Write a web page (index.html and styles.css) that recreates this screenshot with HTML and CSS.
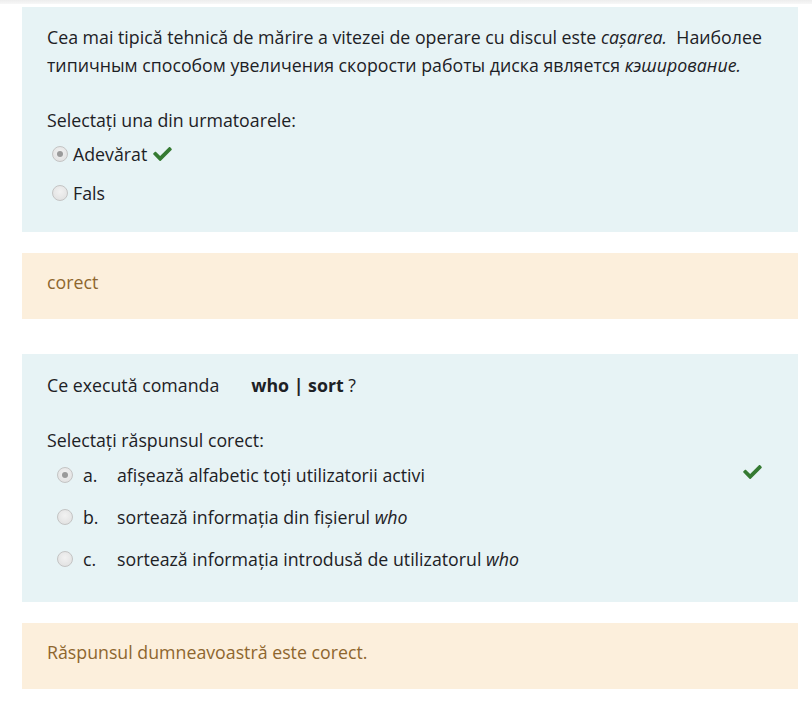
FILE: index.html
```html
<!DOCTYPE html>
<html lang="ro">
<head>
<meta charset="utf-8">
<title>Quiz review</title>
<link rel="stylesheet" href="styles.css">
</head>
<body>
<div class="topbar"></div>
<main class="page">
  <section class="formulation">
    <p class="qtext">Cea mai tipică tehnică de mărire a vitezei de operare cu discul este <em>cașarea.</em>&nbsp; Наиболее<br>типичным способом увеличения скорости работы диска является <em>кэширование.</em></p>
    <div class="prompt">Selectați una din urmatoarele:</div>
    <div class="answers tf">
      <div class="opt">
        <span class="radio checked"></span>
        <span class="label">Adevărat</span>
        <svg class="check inline" viewBox="0 64 512 384" aria-hidden="true"><path d="M173.9 439.4l-166.4-166.4c-10-10-10-26.2 0-36.2l36.2-36.2c10-10 26.2-10 36.2 0L192 312.7 432.1 72.6c10-10 26.2-10 36.2 0l36.2 36.2c10 10 10 26.2 0 36.2l-294.4 294.4c-10 10-26.2 10-36.2 0z"/></svg>
      </div>
      <div class="opt">
        <span class="radio"></span>
        <span class="label">Fals</span>
      </div>
    </div>
  </section>

  <section class="feedback">corect</section>

  <section class="formulation q2">
    <p class="qtext">Ce execută comanda<span class="spacer"></span><strong>who | sort</strong> ?</p>
    <div class="prompt">Selectați răspunsul corect:</div>
    <div class="answers mc">
      <div class="opt">
        <span class="radio checked"></span>
        <span class="num">a.</span>
        <span class="label">afișează alfabetic toți utilizatorii activi</span>
        <svg class="check right" viewBox="0 64 512 384" aria-hidden="true"><path d="M173.9 439.4l-166.4-166.4c-10-10-10-26.2 0-36.2l36.2-36.2c10-10 26.2-10 36.2 0L192 312.7 432.1 72.6c10-10 26.2-10 36.2 0l36.2 36.2c10 10 10 26.2 0 36.2l-294.4 294.4c-10 10-26.2 10-36.2 0z"/></svg>
      </div>
      <div class="opt">
        <span class="radio"></span>
        <span class="num">b.</span>
        <span class="label">sortează informația din fișierul <em>who</em></span>
      </div>
      <div class="opt">
        <span class="radio"></span>
        <span class="num">c.</span>
        <span class="label">sortează informația introdusă de utilizatorul <em>who</em></span>
      </div>
    </div>
  </section>

  <section class="feedback">Răspunsul dumneavoastră este corect.</section>
</main>
</body>
</html>
```

FILE: styles.css
```css
* { box-sizing: border-box; }

html, body {
  margin: 0;
  padding: 0;
  background: #ffffff;
}

body {
  font-family: "Open Sans", "Noto Sans", sans-serif;
  font-size: 17.75px;
  line-height: 28px;
  color: #1d2125;
}

.topbar {
  height: 4px;
  background: linear-gradient(#ededed, #f7f7f7);
}

.page {
  padding: 3px 14px 20px 22px;
  display: flex;
  flex-direction: column;
}

.formulation {
  background: #e7f3f5;
  padding: 16px 25px 20px 25px;
}

.q2 {
  margin-top: 35px;
  padding: 17px 25px 22px 25px;
}

.qtext {
  margin: 0 0 27px 0;
}

.qtext em { font-style: italic; }

.spacer {
  display: inline-block;
  width: 32px;
}

.qtext strong { font-weight: 700; }

.prompt {
  height: 28px;
}

.answers .opt {
  display: flex;
  align-items: center;
}

.tf .opt {
  height: 39px;
  padding-left: 5px;
}

.mc .opt {
  height: 42px;
  padding-left: 10px;
  padding-right: 11px;
}

.radio {
  width: 16px;
  height: 16px;
  border-radius: 50%;
  border: 1px solid #c4c4c4;
  background: radial-gradient(circle at 50% 40%, #f2f2f2 0%, #dedede 100%);
  position: relative;
  flex: none;
}

.radio.checked::after {
  content: "";
  position: absolute;
  left: 4px;
  top: 4px;
  width: 6px;
  height: 6px;
  border-radius: 50%;
  background: #9a9a9a;
}

.tf .label {
  margin-left: 5px;
}

.num {
  margin-left: 10px;
  width: 34px;
}

.check {
  fill: #357a32;
  width: 19px;
  height: 14px;
  flex: none;
}

.check.inline {
  margin-left: 6px;
}

.check.right {
  margin-left: auto;
  margin-top: -6px;
}

.feedback {
  margin-top: 21px;
  background: #fcefdc;
  color: #8e662e;
  padding: 15px 25px 23px 25px;
}
```
